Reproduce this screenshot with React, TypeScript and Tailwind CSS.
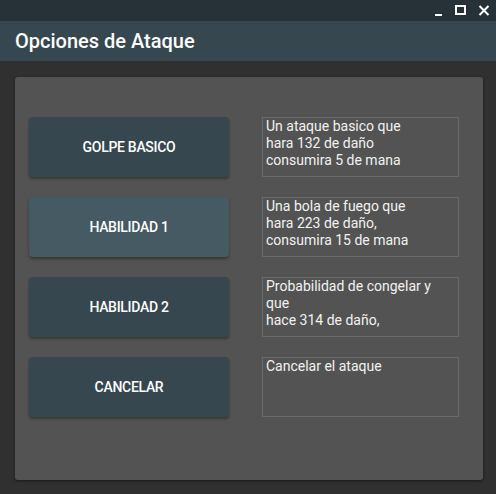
import React, { useState } from 'react';

type Option = {
  label: string;
  lines: string[];
};

const options: Option[] = [
  { label: 'GOLPE BASICO', lines: ['Un ataque basico que', 'hara 132 de daño', 'consumira 5 de mana'] },
  { label: 'HABILIDAD 1', lines: ['Una bola de fuego que', 'hara 223 de daño,', 'consumira 15 de mana'] },
  { label: 'HABILIDAD 2', lines: ['Probabilidad de congelar y', 'que', 'hace 314 de daño,'] },
  { label: 'CANCELAR', lines: ['Cancelar el ataque'] },
];

const App: React.FC = () => {
  const [hovered, setHovered] = useState<number | null>(1);

  return (
    <div
      className="w-[496px] h-[494px] flex flex-col bg-[#303030] text-white overflow-hidden"
      style={{ fontFamily: 'Roboto, "Noto Sans", sans-serif' }}
    >
      {/* window bar */}
      <div className="h-[21px] bg-[#263238] flex items-center justify-end pr-[6px] gap-[11px]">
        <svg width="12" height="12" viewBox="0 0 12 12">
          <rect x="3" y="9" width="7" height="2" fill="#fff" />
        </svg>
        <svg width="12" height="12" viewBox="0 0 12 12">
          <rect x="1" y="1" width="9" height="8" fill="none" stroke="#fff" strokeWidth="2" />
        </svg>
        <svg width="12" height="12" viewBox="0 0 12 12">
          <path d="M1.5 1 L10.5 10 M10.5 1 L1.5 10" stroke="#fff" strokeWidth="2" />
        </svg>
      </div>

      {/* header */}
      <div className="h-[40px] bg-[#37474f] flex items-center pl-[15px]">
        <h1 className="text-[20px] font-medium">Opciones de Ataque</h1>
      </div>

      {/* body */}
      <div className="flex-1 pt-[16px] pl-[15px] pr-[13px] pb-[14px]">
        <div className="h-full bg-[#535353] rounded-[3px] shadow-[0_1px_3px_rgba(0,0,0,0.5)] pt-[40px] pl-[14px] flex flex-col gap-[20px]">
          {options.map((opt, i) => (
            <div key={opt.label} className="flex gap-[33px]">
              <button
                onMouseEnter={() => setHovered(i)}
                onMouseLeave={() => setHovered(1)}
                className={`w-[200px] h-[60px] rounded-[4px] text-[14px] font-medium tracking-[-0.3px] shadow-[0_2px_3px_rgba(0,0,0,0.35)] ${
                  hovered === i ? 'bg-[#465a64]' : 'bg-[#37474f]'
                }`}
              >
                {opt.label}
              </button>
              <div className="w-[197px] h-[60px] border border-[#6b6b6b] px-[3px] text-[14px] leading-[17px] text-[#f2f2f2]">
                {opt.lines.map((l) => (
                  <div key={l}>{l}</div>
                ))}
              </div>
            </div>
          ))}
        </div>
      </div>
    </div>
  );
};

export default App;
